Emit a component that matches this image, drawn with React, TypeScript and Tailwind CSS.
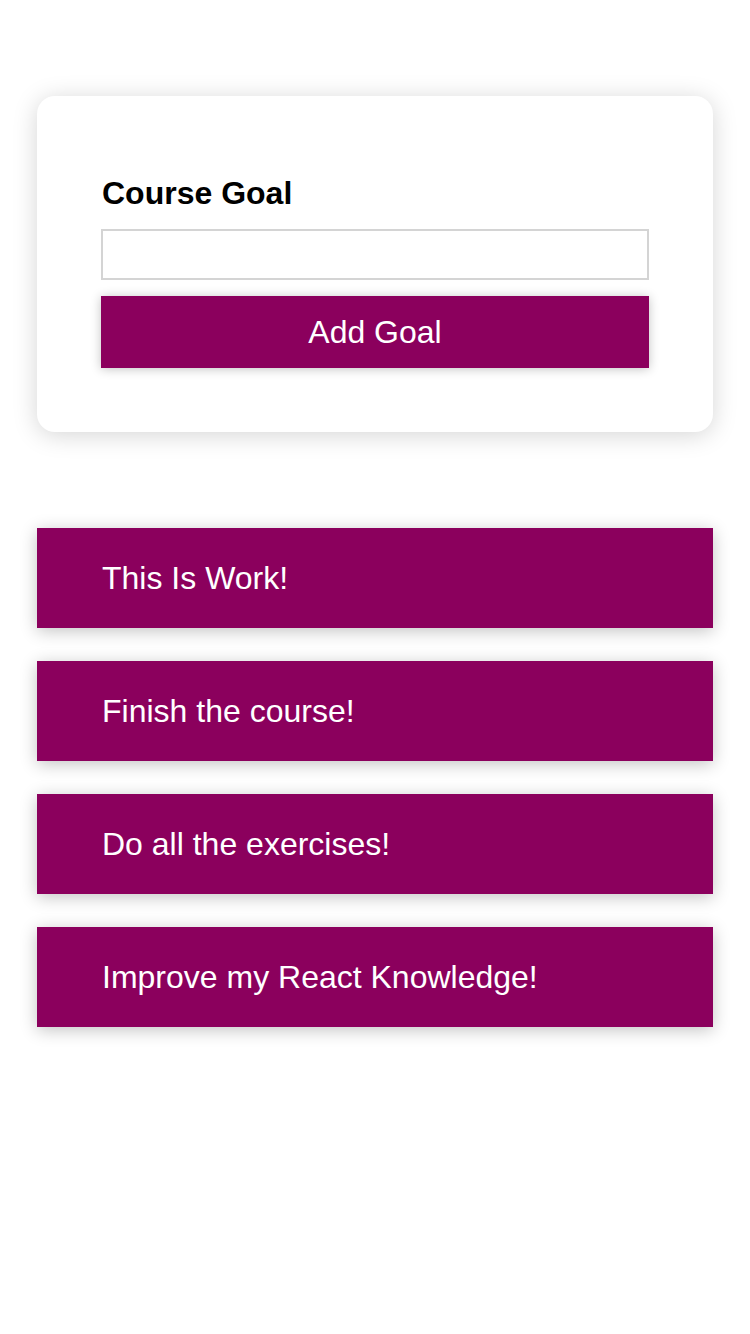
const goals = [
  { id: 'g1', text: 'This Is Work!' },
  { id: 'g2', text: 'Finish the course!' },
  { id: 'g3', text: 'Do all the exercises!' },
  { id: 'g4', text: 'Improve my React Knowledge!' },
]

export default function App() {
  return (
    <div className="min-h-[1334px] w-full bg-white font-['Liberation_Sans',Arial,sans-serif]">
      <section className="px-[37px] pt-[96px]">
        <form
          className="rounded-[18px] bg-white px-[64px] pb-[64px] pt-[79px] shadow-[0_3px_24px_rgba(0,0,0,0.17)]"
          onSubmit={(e) => e.preventDefault()}
        >
          <label className="block pl-px text-[32px] font-bold leading-[37px] text-black">Course Goal</label>
          <input
            type="text"
            className="mt-[17px] block h-[51px] w-full border-2 border-[#d4d4d4] bg-white px-2 text-[32px] outline-none"
          />
          <button
            type="submit"
            className="mt-[16px] block h-[72px] w-full bg-[#8b005d] text-[32px] leading-[37px] text-white shadow-[0_1px_10px_rgba(0,0,0,0.24)]"
          >
            Add Goal
          </button>
        </form>
      </section>

      <section className="px-[37px] pt-[96px]">
        <ul className="flex flex-col gap-[33px]">
          {goals.map((goal) => (
            <li
              key={goal.id}
              className="flex h-[100px] items-center bg-[#8b005d] pl-[65px] text-[32px] leading-[37px] text-white shadow-[0_3px_16px_rgba(0,0,0,0.24)]"
            >
              {goal.text}
            </li>
          ))}
        </ul>
      </section>
    </div>
  )
}
